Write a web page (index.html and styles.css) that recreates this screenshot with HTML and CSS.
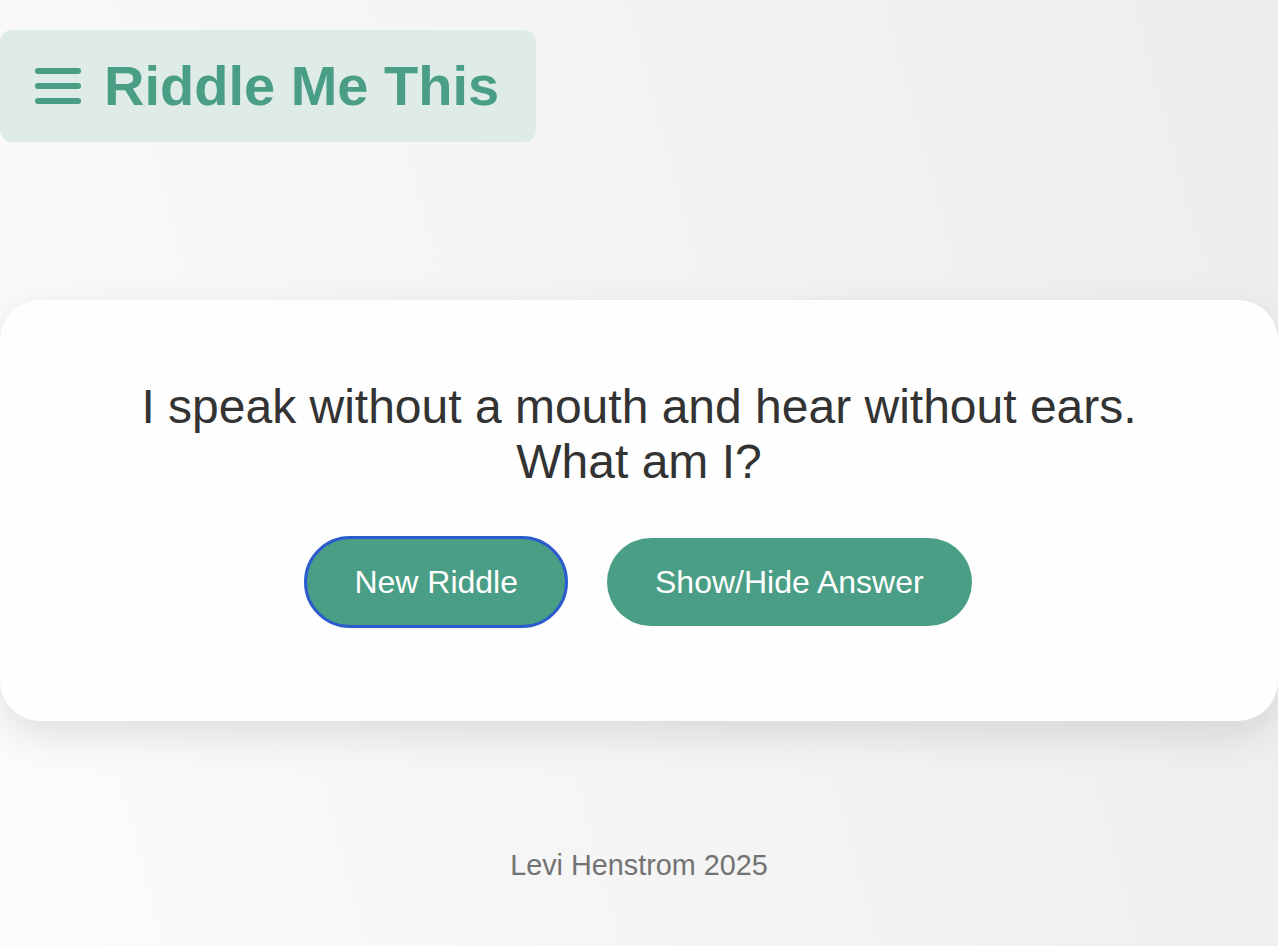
FILE: index.html
```html
<!DOCTYPE html>
<html lang="en">
<head>
<meta charset="utf-8">
<title>Riddle Me This</title>
<link rel="stylesheet" href="styles.css">
</head>
<body>
  <header class="site-header">
    <div class="brand">
      <svg class="menu-icon" width="46" height="36" viewBox="0 0 46 36" aria-hidden="true">
        <rect x="0" y="2" width="46" height="6" rx="3" fill="#4a9e85"/>
        <rect x="0" y="17" width="46" height="6" rx="3" fill="#4a9e85"/>
        <rect x="0" y="32" width="46" height="6" rx="3" fill="#4a9e85"/>
      </svg>
      <h1 class="title">Riddle Me This</h1>
    </div>
  </header>

  <main class="card">
    <p class="riddle">I speak without a mouth and hear without ears.<br>What am I?</p>
    <div class="actions">
      <button class="btn btn-focused" type="button">New Riddle</button>
      <button class="btn" type="button">Show/Hide Answer</button>
    </div>
  </main>

  <footer class="site-footer">Levi Henstrom 2025</footer>
</body>
</html>
```

FILE: styles.css
```css
html, body {
  margin: 0;
  padding: 0;
}

body {
  min-height: 946px;
  font-family: "Liberation Sans", Helvetica, Arial, sans-serif;
  background: linear-gradient(75deg, #fdfbfb 0%, #ebedee 100%);
  color: #333;
  display: flex;
  flex-direction: column;
}

.site-header {
  padding-top: 30px;
  display: flex;
}

.brand {
  display: flex;
  align-items: center;
  gap: 23px;
  height: 112px;
  padding: 0 37px 0 35px;
  background: #deebe7;
  border-radius: 12px;
}

.menu-icon {
  display: block;
  overflow: visible;
  margin-top: -4px;
}

.title {
  margin: 0;
  font-size: 56px;
  font-weight: 700;
  color: #4a9e85;
  line-height: 1.15;
}

.card {
  margin-top: 158px;
  background: #fefefe;
  border-radius: 40px;
  box-shadow: 0 14px 40px rgba(0, 0, 0, 0.11);
  padding: 79px 40px 95px;
  text-align: center;
}

.riddle {
  margin: 0 0 49px;
  font-size: 48px;
  line-height: 1.15;
  color: #333;
}

.actions {
  display: flex;
  justify-content: center;
  gap: 41px;
}

.btn {
  font-family: "Liberation Sans", Helvetica, Arial, sans-serif;
  font-size: 32px;
  line-height: 37px;
  color: #fff;
  background: #4a9e85;
  border: none;
  border-radius: 44px;
  padding: 25.5px 48px;
  cursor: pointer;
}

.btn-focused {
  outline: 3px solid #2b5bcc;
  outline-offset: -1px;
}

.site-footer {
  margin-top: 128px;
  text-align: center;
  font-size: 28.8px;
  color: #737373;
}
```
